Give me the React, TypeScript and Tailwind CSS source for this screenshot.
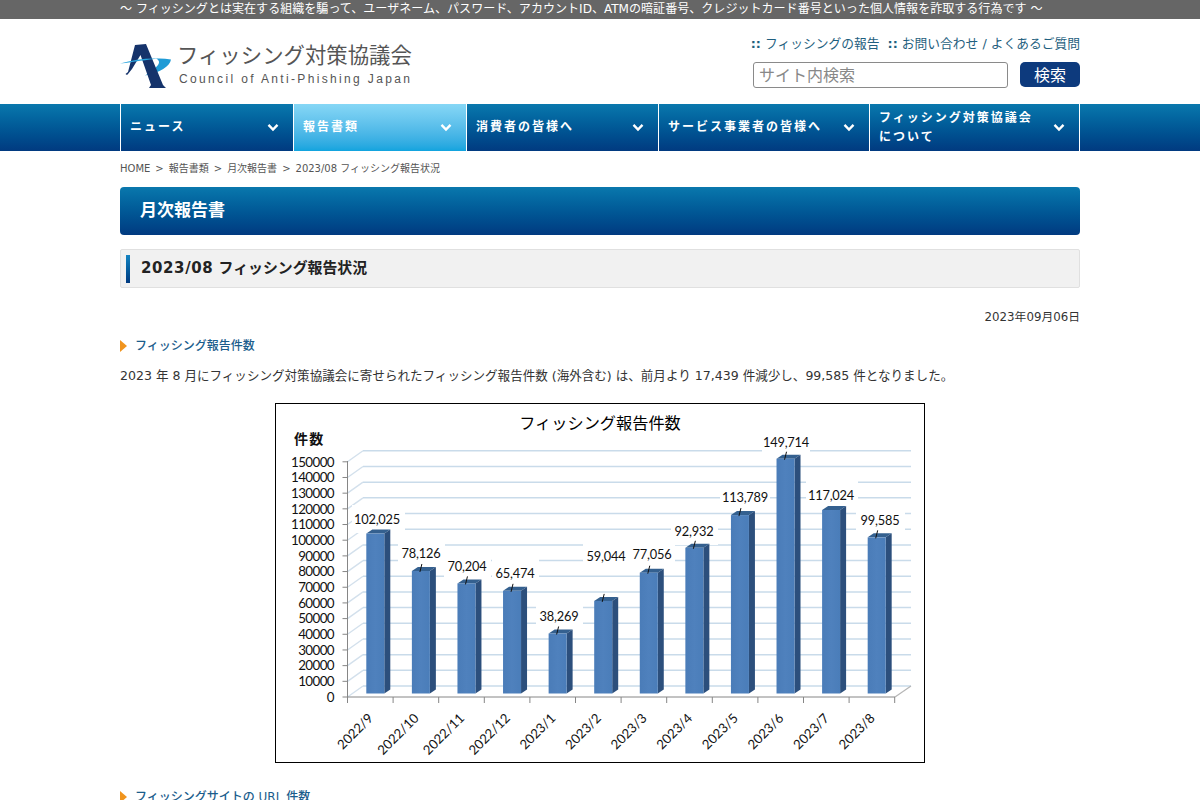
import React from "react";

const FONT = '"DejaVu Sans","Noto Sans CJK JP",sans-serif';
const CJK = '"Noto Sans CJK JP",sans-serif';

const nav = [
  { w: "w-[173px]", lines: ["ニュース"] },
  { w: "w-[173px]", lines: ["報告書類"], active: true },
  { w: "w-[192px]", lines: ["消費者の皆様へ"] },
  { w: "w-[211px]", lines: ["サービス事業者の皆様へ"] },
  { w: "w-[211px]", lines: ["フィッシング対策協議会", "について"], last: true },
];

const crumbs = ["HOME", "報告書類", "月次報告書", "2023/08 フィッシング報告状況"];

const data: { m: string; v: number; label: string; lx: number; ly: number; leader: boolean; mask: [number, number] }[] = [
  { m: "2022/9", v: 102025, label: "102,025", lx: 377, ly: 519, leader: false, mask: [352, 405] },
  { m: "2022/10", v: 78126, label: "78,126", lx: 421, ly: 553, leader: true, mask: [398, 445] },
  { m: "2022/11", v: 70204, label: "70,204", lx: 467, ly: 566, leader: true, mask: [444, 491] },
  { m: "2022/12", v: 65474, label: "65,474", lx: 515, ly: 573, leader: true, mask: [492, 539] },
  { m: "2023/1", v: 38269, label: "38,269", lx: 559, ly: 616, leader: true, mask: [536, 583] },
  { m: "2023/2", v: 59044, label: "59,044", lx: 606, ly: 556, leader: true, mask: [583, 630] },
  { m: "2023/3", v: 77056, label: "77,056", lx: 652, ly: 554, leader: true, mask: [629, 675] },
  { m: "2023/4", v: 92932, label: "92,932", lx: 694, ly: 531, leader: true, mask: [671, 718] },
  { m: "2023/5", v: 113789, label: "113,789", lx: 745, ly: 497, leader: true, mask: [720, 770] },
  { m: "2023/6", v: 149714, label: "149,714", lx: 786, ly: 442, leader: true, mask: [762, 810] },
  { m: "2023/7", v: 117024, label: "117,024", lx: 831, ly: 495, leader: false, mask: [806, 858] },
  { m: "2023/8", v: 99585, label: "99,585", lx: 880, ly: 520, leader: true, mask: [856, 905] },
];

const OX = 275;
const OY = 403;
const X = (x: number) => x - OX;
const Y = (y: number) => y - OY;
const STEP = 15.68;
const levels = Array.from({ length: 16 }, (_, i) => i);

function Chart() {
  const axisX = X(347.5);
  const zeroY = Y(697);
  return (
    <div className="w-[650px] h-[360px] border border-black bg-white">
      <svg width="648" height="358" viewBox="1 1 648 358" className="block" style={{ fontFamily: "Lato, sans-serif" }}>
        <defs>
          <linearGradient id="front" x1="0" x2="1" y1="0" y2="0">
            <stop offset="0" stopColor="#4a7cb8" />
            <stop offset="0.5" stopColor="#4f81bd" />
            <stop offset="1" stopColor="#4a7db9" />
          </linearGradient>
        </defs>
        {levels.map((i) => {
          const fy = zeroY - i * STEP;
          const by = fy - 11;
          return (
            <g key={i}>
              <line x1={axisX} y1={fy} x2={X(363)} y2={by} stroke="#d3e0ec" strokeWidth="1.4" />
              <line x1={X(363)} y1={by} x2={X(911)} y2={by} stroke="#c9dbea" strokeWidth="1.5" />
              <line x1={axisX - 5} y1={fy} x2={axisX} y2={fy} stroke="#868686" />
              <text x={X(334)} y={fy + 4.8} textAnchor="end" fontSize="13.4" letterSpacing="-0.6" fill="#111">
                {i * 10000}
              </text>
            </g>
          );
        })}
        <line x1={X(895)} y1={zeroY} x2={X(911)} y2={zeroY - 11} stroke="#b5b5b5" strokeWidth="1.2" />
        {data.map((d) => (
          <rect key={d.m + "m"} x={X(d.mask[0])} y={Y(d.ly - 14)} width={d.mask[1] - d.mask[0]} height={28} fill="#fff" />
        ))}
        {data.map((d, i) => {
          const x = X(366.3 + i * 45.58);
          const base = Y(693.5);
          const top = base - (d.v / 10000) * STEP;
          const w = 18;
          const dx = 6;
          const dy = 4;
          return (
            <g key={d.m}>
              <polygon points={`${x},${top} ${x + dx},${top - dy} ${x + w + dx},${top - dy} ${x + w},${top}`} fill="#34608f" />
              <polygon points={`${x + w},${top} ${x + w + dx},${top - dy} ${x + w + dx},${base - dy} ${x + w},${base}`} fill="#2c4f7c" />
              <rect x={x} y={top} width={w} height={base - top} fill="url(#front)" />
              {d.leader && <line x1={x + 10} y1={top - 7} x2={x + 8} y2={top + 1} stroke="#111" strokeWidth="1" />}
            </g>
          );
        })}
        <line x1={axisX} y1={Y(461)} x2={axisX} y2={zeroY + 6} stroke="#868686" />
        <line x1={axisX} y1={zeroY} x2={X(895)} y2={zeroY} stroke="#868686" />
        {data.map((_, i) => (
          <line key={i} x1={axisX + i * 45.6 + 45.6} y1={zeroY} x2={axisX + i * 45.6 + 45.6} y2={zeroY + 6} stroke="#868686" />
        ))}
        {data.map((d) => (
          <text key={d.m + "l"} x={X(d.lx)} y={Y(d.ly + 4.8)} textAnchor="middle" fontSize="12.8" letterSpacing="-0.2" fill="#111">
            {d.label}
          </text>
        ))}
        {data.map((d, i) => {
          const ex = X(374 + i * 45.6);
          const ey = Y(719);
          return (
            <text key={d.m + "x"} x={ex} y={ey} textAnchor="end" fontSize="13.2" fill="#111" transform={`rotate(-45 ${ex} ${ey})`}>
              {d.m}
            </text>
          );
        })}
        <text x={X(600)} y={Y(429)} textAnchor="middle" fontSize="16.2" fill="#000" style={{ fontFamily: CJK }}>
          フィッシング報告件数
        </text>
        <text x={X(294)} y={Y(444)} fontSize="14" fontWeight="700" fill="#111" letterSpacing="1.2" style={{ fontFamily: CJK }}>
          件数
        </text>
      </svg>
    </div>
  );
}

function Chevron({ color = "#fff" }: { color?: string }) {
  return (
    <svg width="12" height="9" viewBox="0 0 12 9" fill="none">
      <path d="M1.5 1.8 6 6.5l4.5-4.7" stroke={color} strokeWidth="2.4" />
    </svg>
  );
}

function Logo() {
  return (
    <svg width="52" height="46" viewBox="0 0 52 46" className="shrink-0">
      <path d="M25 33.5C40 31 50 24 51 17.5 46 16.5 41 16.3 36 16.5 39 18 40 20 38 23 35 27 31 30 25 33.5Z" fill="#1f9bd6" />
      <path d="M15 3 26 2 43 43 46 46 29 46 31 43 20.5 13 12 27 8 32 7 33 5.5 32 8 30Z" fill="#15336b" />
      <path d="M0 21.5C12 18 26 16 38 16.5 28 17.5 14 20 0 21.5Z" fill="#2aa5de" />
    </svg>
  );
}

function Heading({ children }: { children: React.ReactNode }) {
  return (
    <div className="flex items-center gap-[8px] text-[12px] leading-[16px] text-[#1b5d8c] font-medium">
      <span className="w-0 h-0 border-y-[6px] border-y-transparent border-l-[7px] border-l-[#f0941e]" />
      <span>{children}</span>
    </div>
  );
}

export default function App() {
  return (
    <div className="h-screen overflow-hidden bg-white text-[#333]" style={{ fontFamily: FONT }}>
      <div className="h-[19px] bg-[#666666]">
        <div className="w-[960px] mx-auto text-white text-[12.05px] leading-[18px] whitespace-nowrap">
          〜 フィッシングとは実在する組織を騙って、ユーザネーム、パスワード、アカウントID、ATMの暗証番号、クレジットカード番号といった個人情報を詐取する行為です 〜
        </div>
      </div>

      <header className="w-[960px] mx-auto h-[85px] flex justify-between">
        <div className="flex gap-[5px] pt-[23px]">
          <Logo />
          <div className="flex flex-col text-[#555] -mt-[3px]" style={{ fontFamily: CJK }}>
            <div className="text-[21.4px] leading-[30px] whitespace-nowrap">フィッシング対策協議会</div>
            <div className="text-[12px] leading-[15px] mt-[3px] pl-[2px] tracking-[2.35px] whitespace-nowrap" style={{ fontFamily: '"Liberation Sans",sans-serif' }}>
              Council of Anti-Phishing Japan
            </div>
          </div>
        </div>
        <div className="flex flex-col items-end pt-[16px]">
          <div className="text-[12.75px] leading-[18px] text-[#1f5f80] whitespace-nowrap">
            <span className="font-bold">::</span> フィッシングの報告 &nbsp;<span className="font-bold">::</span> お問い合わせ / よくあるご質問
          </div>
          <div className="flex gap-[12px] mt-[9px]">
            <input
              readOnly
              placeholder="サイト内検索"
              className="w-[255px] h-[26px] px-[5px] pb-[2px] border border-[#8a8a8a] rounded-[3px] text-[16px] placeholder:text-[#888] outline-none"
              style={{ fontFamily: CJK }}
            />
            <button className="w-[60px] h-[25px] rounded-[5px] bg-[#0d3a7d] text-white text-[16px] leading-[25px]" style={{ fontFamily: CJK }}>
              検索
            </button>
          </div>
        </div>
      </header>

      <nav className="h-[47px] bg-gradient-to-b from-[#0a78ad] to-[#013a80]">
        <div className="w-[960px] mx-auto flex h-full">
          {nav.map((n) => (
            <div
              key={n.lines[0]}
              className={`${n.w} shrink-0 h-full border-l border-white flex items-center justify-between pl-[9px] pr-[14px] text-white text-[12px] leading-[19px] font-bold tracking-[2px] ${
                n.active ? "bg-gradient-to-b from-[#86d7f6] to-[#10a4de]" : ""
              } ${n.last ? "border-r" : ""}`}
            >
              <div className="whitespace-nowrap">
                {n.lines.map((l) => (
                  <div key={l}>{l}</div>
                ))}
              </div>
              <Chevron />
            </div>
          ))}
        </div>
      </nav>

      <main className="w-[960px] mx-auto">
        <div className="flex text-[10px] leading-[14px] text-[#555] mt-[11px] whitespace-nowrap">
          {crumbs.map((c, i) => (
            <span key={c}>
              {i > 0 && <span className="mx-[5px]">&gt;</span>}
              {c}
            </span>
          ))}
        </div>
        <div className="mt-[11px] h-[48px] rounded-[4px] bg-gradient-to-b from-[#0a78ad] to-[#013a80] text-white font-bold text-[17px] leading-[47px] pl-[20px]">
          月次報告書
        </div>
        <div className="mt-[14px] h-[39px] bg-[#f1f1f1] border border-[#e0e0e0] rounded-[2px] flex items-center pl-[5px] gap-[11px]">
          <span className="w-[4px] h-[28px] bg-gradient-to-b from-[#1584c2] to-[#013a80]" />
          <span className="font-bold text-[15px] text-[#222] whitespace-nowrap">
            <span className="tracking-[0.6px]">2023/08</span> <span className="text-[14.9px]">フィッシング報告状況</span>
          </span>
        </div>
        <div className="mt-[21px] text-right text-[11.8px] leading-[16px]">2023年09月06日</div>
        <div className="mt-[13px]">
          <Heading>フィッシング報告件数</Heading>
        </div>
        <p className="mt-[13px] text-[12.55px] leading-[18px] whitespace-nowrap">
          2023 年 8 月にフィッシング対策協議会に寄せられたフィッシング報告件数 (海外含む) は、前月より 17,439 件減少し、99,585 件となりました。
        </p>
        <div className="mt-[18px] flex justify-center">
          <Chart />
        </div>
        <div className="mt-[26px]">
          <Heading>フィッシングサイトの URL 件数</Heading>
        </div>
      </main>
    </div>
  );
}
